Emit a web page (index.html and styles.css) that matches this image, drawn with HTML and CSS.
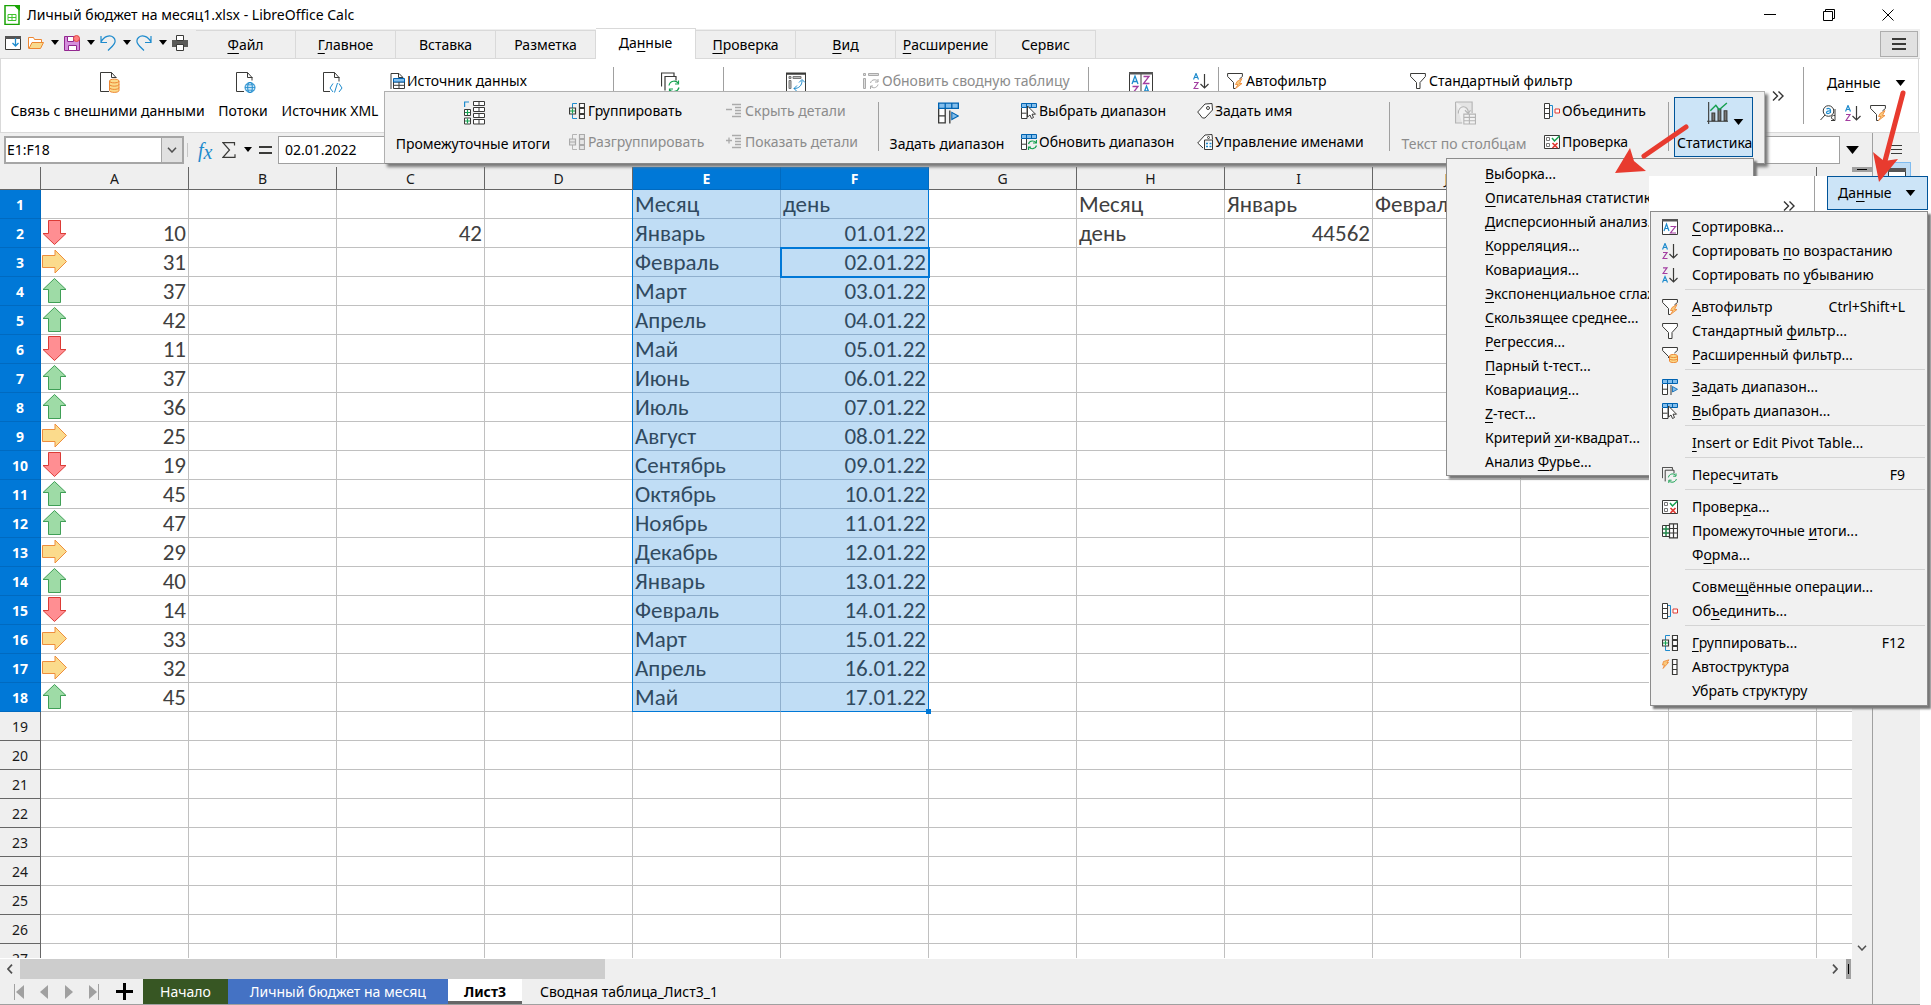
FILE: index.html
```html
<!DOCTYPE html>
<html lang="ru">
<head>
<meta charset="utf-8">
<title>Личный бюджет на месяц1.xlsx - LibreOffice Calc</title>
<link rel="stylesheet" href="styles.css">
</head>
<body>
<svg class="sprite" aria-hidden="true">
  <symbol id="i-down" viewBox="0 0 25 25"><path d="M6.500 .5h12v13h5.500l-11.500 11-11.500-11h5.500z" fill="#ff8e92" stroke="#dc3b36"/></symbol>
  <symbol id="i-up" viewBox="0 0 25 25"><path d="M6.500 24.500h12v-13h5.500l-11.500-11-11.500 11h5.500z" fill="#9edba6" stroke="#3f9f56"/></symbol>
  <symbol id="i-side" viewBox="0 0 25 25"><path d="M.5 6.500v12h12.500v5.500l11.500-11.500-11.500-11.500v5.500z" fill="#fbdb8c" stroke="#ee8e3c"/></symbol>
  <symbol id="i-caret" viewBox="0 0 8 5"><path d="M0 0h8l-4 5z" fill="#000"/></symbol>
  <symbol id="i-doc" viewBox="0 0 16 20"><path d="M1 .5h10l4 4v15H1z" fill="#fff" stroke="#18a303" stroke-width="1.500"/><path d="M10 0h6v6z" fill="#18a303"/><path d="M4 9.500h8v6H4zM4 12.500h8M8 9.500v6" fill="none" stroke="#43c330"/></symbol>
  <symbol id="i-win" viewBox="0 0 16 16"><path d="M.5 2.500h15v12H.5z" fill="#fff" stroke="#3a3a38"/><path d="M0 1h16v3H0z" fill="#555"/><path d="M10.500 3v8M7.500 8l3 3 3-3" fill="none" stroke="#1e8bcd" stroke-width="1.300"/></symbol>
  <symbol id="i-open" viewBox="0 0 16 16"><path d="M.5 13.500v-11h5l1 2h7v3" fill="#fff" stroke="#ed8733"/><path d="M1 13.500l3-6h11.500l-3 6z" fill="#f8db8f" stroke="#ed8733"/></symbol>
  <symbol id="i-save" viewBox="0 0 16 16"><path d="M.5 1.500h13l2 2v12H.5z" fill="#d48fdc" stroke="#92278f"/><path d="M3.500 1.500h6v5h-6zM4.500 10.500h8v5h-8z" fill="#fff" stroke="#92278f"/><circle cx="12.500" cy="3.500" r="3" fill="#ff7d80" stroke="#e24a40"/></symbol>
  <symbol id="i-undo" viewBox="0 0 16 16"><path d="M1 1v6.500h6M1 7C4 1 10-.5 13.500 2.500c4 4 0 8-5.500 13" fill="none" stroke="#1e8bcd" stroke-width="1.200"/></symbol>
  <symbol id="i-redo" viewBox="0 0 16 16"><path d="M15 1v6.500H9M15 7C12 1 6-.5 2.500 2.500c-4 4 0 8 5.500 13" fill="none" stroke="#1e8bcd" stroke-width="1.200"/></symbol>
  <symbol id="i-print" viewBox="0 0 16 16"><path d="M0 5h16v7H0z" fill="#5c5c5a"/><path d="M4.500 .5h7v5h-7zM4.500 9.500h7v6h-7z" fill="#fff" stroke="#3a3a38"/></symbol>
  <symbol id="i-extdata" viewBox="0 0 20 21"><path d="M9 19.500H.5V.5h11l4.500 5M11.500 .5v5h5" fill="none" stroke="#3a3a38"/><path d="M9.500 9v9.500c0 2.500 9.500 2.500 9.500 0V9c0-2.500-9.500-2.500-9.500 0z" fill="#fbdb8c" stroke="#ed8733"/><path d="M9.500 9c0 2.500 9.500 2.500 9.500 0M9.500 12.300c0 2.500 9.500 2.500 9.500 0M9.500 15.500c0 2.500 9.500 2.500 9.500 0" fill="none" stroke="#ed8733"/></symbol>
  <symbol id="i-stream" viewBox="0 0 20 21"><path d="M8 19.500H.5V.5h11l4.500 5v3M11.500 .5v5h5" fill="none" stroke="#3a3a38"/><circle cx="14" cy="15.500" r="5" fill="#cfe7f8" stroke="#1e8bcd"/><ellipse cx="14" cy="15.500" rx="2.300" ry="5" fill="none" stroke="#1e8bcd"/><path d="M9 15.500h10M10 12.800h8M10 18.200h8" stroke="#1e8bcd" stroke-width=".8"/></symbol>
  <symbol id="i-xml" viewBox="0 0 20 21"><path d="M7 19.500H.5V.5h11l4.500 5v4M11.500 .5v5h5" fill="none" stroke="#3a3a38"/><path d="M10 11.500L7 16l3 4M16 11.500l3 4.500-3 4M14.500 11l-3 9.500" fill="none" stroke="#1e8bcd"/></symbol>
  <symbol id="i-source" viewBox="0 0 16 16"><path d="M1 16V.5h8l4 4M8.500 .5v4h4.500" fill="none" stroke="#3a3a38"/><path d="M3.500 9h11v6.500h-11z" fill="#fff" stroke="#3a3a38"/><path d="M3.500 5.500h11v3.500h-11z" fill="#83beec" stroke="#0063b1"/><path d="M3.500 12.300h11M9 9v6.500" stroke="#3a3a38"/></symbol>
  <symbol id="i-refresh" viewBox="0 0 20 20"><path d="M.5 14V.5H13v3M4 18V4h11v4" fill="none" stroke="#3a3a38" stroke-width="1.200"/><path d="M8 13c1-5 7-5.500 9-2.500M17.500 8v3.500H14M18 15c-1 4.500-7 5-9 2.500M8.500 20v-3.500H12" fill="none" stroke="#14a04f" stroke-width="1.200"/></symbol>
  <symbol id="i-pivot" viewBox="0 0 20 20"><path d="M.5 1.500h19v18H.5z" fill="#fff" stroke="#3a3a38"/><path d="M0 0h20v2H0z" fill="#3a3a38"/><path d="M3 4h2v2H3zM7 4h8v2H7zM3 8h2v8H3z" fill="#bbb" stroke="#777"/><path d="M8 16c5 0 8-3 8-8M8 16l3-3M8 16l3 3M16 7l-3 3M16 7l3 3" fill="none" stroke="#1e8bcd"/></symbol>
  <symbol id="i-pivotref" viewBox="0 0 16 16"><path d="M.5 .5h2v2h-2zM5.500 .5h10v2h-10zM.5 5.500h2v10h-2z" fill="#ddd" stroke="#aaa"/><path d="M7.500 10c1-4 6-4 7.500-1.500M15 6v3h-3M15 11.500c-1 4-6 4-7.500 1.500M7.500 16v-3H10" fill="none" stroke="#aaa"/></symbol>
  <symbol id="i-sortbox" viewBox="0 0 24 22"><path d="M.5 1.500h23V22M.5 1.500V22M12 2v20" fill="none" stroke="#3a3a38"/><path d="M0 0h24v2.500H0z" fill="#555"/><path d="M3 12l3-8 3 8M4 9.500h4M14.500 22l3-8 3 8M15.500 19h4" fill="none" stroke="#1e8bcd" stroke-width="1.300"/><path d="M3.500 14.500h5.500L3.500 21.500h6M14.500 4.500h5.500l-5.500 7h6" fill="none" stroke="#a33ea1" stroke-width="1.300"/></symbol>
  <symbol id="i-az" viewBox="0 0 16 16"><path d="M.5 6.500l2.500-6 2.500 6M1.500 4.500h3" fill="none" stroke="#1e8bcd" stroke-width="1.200"/><path d="M1 9.500h4l-4 6h4.500" fill="none" stroke="#a33ea1" stroke-width="1.200"/><path d="M11.500 1v14M7.500 11l4 4 4-4" fill="none" stroke="#3a3a38" stroke-width="1.200"/></symbol>
  <symbol id="i-za" viewBox="0 0 16 16"><path d="M.5 15.500l2.500-6 2.500 6M1.500 13.500h3" fill="none" stroke="#1e8bcd" stroke-width="1.200"/><path d="M1 .8h4l-4 5.700h4.500" fill="none" stroke="#a33ea1" stroke-width="1.200"/><path d="M11.500 1v14M7.500 11l4 4 4-4" fill="none" stroke="#3a3a38" stroke-width="1.200"/></symbol>
  <symbol id="i-sort" viewBox="0 0 16 16"><path d="M.5 1.500h15v14H.5z" fill="#fff" stroke="#3a3a38"/><path d="M0 0h16v2.500H0z" fill="#555"/><path d="M2 12l2.500-7L7 12M3 9.500h3" fill="none" stroke="#1e8bcd" stroke-width="1.200"/><path d="M8.500 7.500h5L8.500 14H14" fill="none" stroke="#a33ea1" stroke-width="1.200"/></symbol>
  <symbol id="i-funnel" viewBox="0 0 16 16"><path d="M.6 .5h14.800v3L10 9.500v6H6.500v-6L.6 3.500z" fill="#fff" stroke="#3a3a38"/></symbol>
  <symbol id="i-auto" viewBox="0 0 16 16"><path d="M8.500 15.500h-2v-6L.6 3.500v-3h14.800v3l-3 2.500" fill="#fff" stroke="#3a3a38"/><path d="M15 5.500l-5 3-1.500 3h2.500L8.500 15.500l6.500-5h-2.500z" fill="#f9c87c" stroke="#ed8733" stroke-width=".8"/></symbol>
  <symbol id="i-advf" viewBox="0 0 16 16"><path d="M6.500 11V9.500L.6 3.500v-3h14.800v3l-3 2.500" fill="#fff" stroke="#3a3a38"/><path d="M7.500 9v5c0 2 8 2 8 0V9c0-2-8-2-8 0z" fill="#fbdb8c" stroke="#ed8733"/><path d="M7.500 9c0 2 8 2 8 0M7.500 11.500c0 2 8 2 8 0" fill="none" stroke="#ed8733"/></symbol>
  <symbol id="i-find" viewBox="0 0 16 16"><circle cx="8.500" cy="6" r="5.300" fill="#fff" stroke="#3a3a38"/><path d="M5 10L.5 15M11 15.500h4V4M15 10.500c-4-1-5 4-1 4" fill="none" stroke="#3a3a38"/><path d="M6.500 4c1.500-1 4-.5 4 1v3M10.500 6c-5-.5-5 3-2 2.500l2-1" fill="none" stroke="#1e8bcd" stroke-width="1.200"/></symbol>
  <symbol id="i-subt" viewBox="0 0 21 24"><path d="M.6 6V1H5" fill="none" stroke="#1e8bcd" stroke-width="1.200"/><path d="M.5 8.500h6v6h-6zM.5 17h6v6h-6zM9.500 .5h11v4h-11zM9.500 6.500h11v4h-11zM9.500 12.500h11v4h-11zM9.500 18.500h11v4.500h-11zM15 .5v4M15 6.500v4M15 12.500v4M15 18.500v4.500" fill="#fff" stroke="#3a3a38"/><path d="M3.500 9v5M1 11.500h5M3.500 17.500v5M1 20h5" stroke="#14a04f" stroke-width="1.200"/></symbol>
  <symbol id="i-group" viewBox="0 0 16 16"><path d="M8 .5H3.500v15H8" fill="none" stroke="#1e8bcd"/><path d="M.5 5h6v6h-6zM10.500 .5h5v4h-5zM10.500 5.500h5v5h-5zM10.500 11.500h5v4h-5z" fill="#fff" stroke="#3a3a38" stroke-width="1.200"/><path d="M3.500 5.500v5M1 8h5" stroke="#14a04f" stroke-width="1.200"/></symbol>
  <symbol id="i-ungroup" viewBox="0 0 16 16"><path d="M8 .5H3.500v15H8" fill="none" stroke="#b5b5b5"/><path d="M.5 5h6v6h-6zM10.500 .5h5v4h-5zM10.500 5.500h5v5h-5zM10.500 11.500h5v4h-5zM1 8h5" fill="#e6e6e6" stroke="#aaa" stroke-width="1.200"/></symbol>
  <symbol id="i-minus" viewBox="0 0 16 16"><path d="M0 6.500h6M6 1.500h9M9 4.500h6M9 7.500h6M9 10.500h6M6 13.500h9" stroke="#aaa" stroke-width="1.300"/></symbol>
  <symbol id="i-plus" viewBox="0 0 16 16"><path d="M0 6.500h6M3 3.500v6M6 1.500h9M9 4.500h6M9 7.500h6M9 10.500h6M6 13.500h9" stroke="#aaa" stroke-width="1.300"/></symbol>
  <symbol id="i-range" viewBox="0 0 16 16"><path d="M.5 5v10.500h5V5M.5 10.200h5M9 6v10" fill="#fff" stroke="#3a3a38"/><path d="M.5 .5h15v4H.5zM5.500 .5v4M10.500 .5v4" fill="#83beec" stroke="#0063b1"/><path d="M10.500 7.500v5.500l5-2.700z" fill="#83beec" stroke="#0063b1" stroke-width=".8"/></symbol>
  <symbol id="i-select" viewBox="0 0 16 16"><path d="M.5 5v10.500h5.500V5M.5 10.200h5" fill="#fff" stroke="#3a3a38"/><path d="M.5 .5h15v4H.5zM5.500 .5v4M10.500 .5v4" fill="#83beec" stroke="#0063b1"/><path d="M6.500 3v11l2.500-2 1.500 3.500 2-1-1.500-3.300h3.500z" fill="#fff" stroke="#3a3a38"/></symbol>
  <symbol id="i-update" viewBox="0 0 16 16"><path d="M.5 5v10.500h5V5M.5 10.200h5" fill="#fff" stroke="#3a3a38"/><path d="M.5 .5h15v4H.5zM5.500 .5v4M10.500 .5v4" fill="#83beec" stroke="#0063b1"/><path d="M7.500 10c1-4 6-3.500 7.500-1.500M15.500 6v3H12M15.500 11.500c-1 4-6 4-7.500 1.500M7.500 16v-3H10" fill="none" stroke="#14a04f" stroke-width="1.200"/></symbol>
  <symbol id="i-tag" viewBox="0 0 16 16"><path d="M.7 9L8 1l7-.5.5 6.500-7.500 8H5.500z" fill="#fff" stroke="#3a3a38"/><circle cx="11" cy="5" r="1.500" fill="none" stroke="#3a3a38"/></symbol>
  <symbol id="i-tags" viewBox="0 0 16 16"><path d="M6 14L.7 9 8 1l7-.5.5 5M7.500 6v9.500h8V6z" fill="#fff" stroke="#3a3a38"/><circle cx="11.500" cy="3.500" r="1" fill="none" stroke="#3a3a38"/><path d="M9 9.500h2M12.500 9.500h2M9 12.500h2M12.500 12.500h2" stroke="#1e8bcd" stroke-width="1.500"/></symbol>
  <symbol id="i-cols" viewBox="0 0 19 21"><path d="M.5 .5h15v10M.5 .5v19h6" fill="#e4e4e4" stroke="#b4b4b4"/><path d="M3 11c0-8 9-8 9-1M9 8l3 3 2-3" fill="none" stroke="#b4b4b4"/><path d="M8 11.500h10.500v9H8zM8 14.500h10.500M8 17.500h10.500M13 11.500v9" fill="#f3f3f3" stroke="#b4b4b4"/></symbol>
  <symbol id="i-merge" viewBox="0 0 16 16"><path d="M.5 .5h5v15h-5zM.5 5.500h5M.5 10.500h5" fill="#fff" stroke="#3a3a38"/><path d="M6 2.500h2.500v11H6" fill="none" stroke="#1e8bcd"/><path d="M11 6h4.500v4H11z" fill="#fff" stroke="#e03a32"/></symbol>
  <symbol id="i-check" viewBox="0 0 16 16"><path d="M.5 1.500h15v13H.5z" fill="#fff" stroke="#3a3a38"/><path d="M2.500 3.500h3v3h-3zM2.500 9.500h3v3h-3z" fill="none" stroke="#777"/><path d="M8 4l2.500 3L15.500 2" fill="none" stroke="#14a04f" stroke-width="1.500"/><path d="M8.500 9l5 5M13.500 9l-5 5" stroke="#e03a32" stroke-width="1.700"/></symbol>
  <symbol id="i-stat" viewBox="0 0 19 20"><path d="M1.500 0v20M0 17.500h19" stroke="#3a3a38"/><path d="M4.500 10v7h2.500v-7zM10 6.500V17h2.500V6.500zM15.500 8v9H18V8z" fill="#777" stroke="#3a3a38"/><path d="M3 8l5-5 3 4 7-6" fill="none" stroke="#14a04f" stroke-width="1.300"/></symbol>
  <symbol id="i-subm" viewBox="0 0 16 16"><path d="M.5 2.500h7v11h-7zM.5 6h7M.5 10h7M4 2.500v11" fill="#fff" stroke="#3a3a38"/><path d="M4 3v10M1 6h6M1 10h6" stroke="#14a04f"/><path d="M7.500 .8h8v14h-8zM7.500 5.500h8M7.500 10h8M11.500 .8v14" fill="#fff" stroke="#3a3a38" stroke-width="1.200"/></symbol>
  <symbol id="i-outline" viewBox="0 0 16 16"><path d="M7 .8L1.500 2.500.5 6h2L1 9.500l5.500-6H5z" fill="#f9c87c" stroke="#ed8733" stroke-width=".8"/><path d="M10.500 .5h4.500v5h-4.500zM10.500 5.500h4.500v5h-4.500zM10.500 10.500h4.500v5h-4.500z" fill="#fff" stroke="#3a3a38" stroke-width="1.200"/></symbol>
  <symbol id="i-more" viewBox="0 0 12 10"><path d="M1 .5L5.500 5 1 9.500M6.500 .5L11 5 6.500 9.500" fill="none" stroke="#333" stroke-width="1.400"/></symbol>
  <symbol id="i-burger" viewBox="0 0 14 12"><path d="M0 1h14M0 6h14M0 11h14" stroke="#3a3a38" stroke-width="2"/></symbol>
  <symbol id="i-chev" viewBox="0 0 10 6"><path d="M1 .7L5 5 9 .7" fill="none" stroke="#505050" stroke-width="1.500"/></symbol>
</svg>

<header class="titlebar">
  <svg class="doc"><use href="#i-doc"/></svg>
  <h1 class="title">Личный бюджет на месяц1.xlsx - LibreOffice Calc</h1>
  <div class="winbtns">
    <button aria-label="Свернуть"><svg viewBox="0 0 12 12"><path d="M0 5.500h12" stroke="#000"/></svg></button>
    <button aria-label="Развернуть"><svg viewBox="0 0 12 12"><path d="M.5 2.500h9v9h-9zM2.500 2.500v-2h9v9h-2" fill="none" stroke="#000"/></svg></button>
    <button aria-label="Закрыть"><svg viewBox="0 0 12 12"><path d="M.5 .5l11 11M11.500 .5l-11 11" stroke="#000"/></svg></button>
  </div>
</header>

<div class="app">
  <nav class="tabstrip">
    <div class="quick">
      <button aria-label="Режим"><svg class="s16"><use href="#i-win"/></svg></button>
      <button aria-label="Открыть"><svg class="s16"><use href="#i-open"/></svg><svg class="caret"><use href="#i-caret"/></svg></button>
      <button aria-label="Сохранить"><svg class="s16"><use href="#i-save"/></svg><svg class="caret"><use href="#i-caret"/></svg></button>
      <button aria-label="Отменить"><svg class="s16"><use href="#i-undo"/></svg><svg class="caret"><use href="#i-caret"/></svg></button>
      <button aria-label="Вернуть"><svg class="s16"><use href="#i-redo"/></svg><svg class="caret"><use href="#i-caret"/></svg></button>
      <button aria-label="Печать"><svg class="s16"><use href="#i-print"/></svg></button>
    </div>
    <div class="tabs">
      <button><u>Ф</u>айл</button><button><u>Г</u>лавное</button><button>Вставка</button><button>Разметка</button><button class="active">Да<u>н</u>ные</button><button><u>П</u>роверка</button><button><u>В</u>ид</button><button><u>Р</u>асширение</button><button>Сервис</button>
    </div>
    <button class="burger" aria-label="Меню"><svg><use href="#i-burger"/></svg></button>
  </nav>

  <section class="ribbon">
    <button class="big"><svg class="s21"><use href="#i-extdata"/></svg>Связь с внешними данными</button>
    <button class="big"><svg class="s21"><use href="#i-stream"/></svg>Потоки</button>
    <button class="big"><svg class="s21"><use href="#i-xml"/></svg>Источник XML</button>
    <button class="row near"><svg class="s16"><use href="#i-source"/></svg>Источник данных</button>
    <i class="sep"></i>
    <button class="big" aria-label="Пересчитать"><svg class="s21"><use href="#i-refresh"/></svg></button>
    <i class="sep"></i>
    <button class="big" aria-label="Сводная таблица"><svg class="s21"><use href="#i-pivot"/></svg></button>
    <button class="row tight" disabled><svg class="s16"><use href="#i-pivotref"/></svg>Обновить сводную таблицу</button>
    <i class="sep"></i>
    <button class="big" aria-label="Сортировка"><svg class="s24"><use href="#i-sortbox"/></svg></button>
    <button class="row tight" aria-label="По возрастанию"><svg class="s16"><use href="#i-az"/></svg></button>
    <i class="sep"></i>
    <button class="row"><svg class="s16"><use href="#i-auto"/></svg>Автофильтр</button>
    <button class="row"><svg class="s16"><use href="#i-funnel"/></svg>Стандартный фильтр</button>
    <button class="more" aria-label="Ещё"><svg><use href="#i-more"/></svg></button>
    <i class="sep"></i>
    <div class="context">
      <button class="ctx-title"><span>Да<u>н</u>ные</span><svg class="caret wide"><use href="#i-caret"/></svg></button>
      <div class="ctx-icons">
        <button aria-label="Найти"><svg class="s16"><use href="#i-find"/></svg></button>
        <button aria-label="По возрастанию"><svg class="s16"><use href="#i-az"/></svg></button>
        <button aria-label="Автофильтр"><svg class="s16"><use href="#i-auto"/></svg></button>
      </div>
    </div>
  </section>

  <div class="workspace">
    <main class="main">
      <div class="formula">
        <div class="namebox"><input aria-label="Диапазон" value="E1:F18"><button aria-label="Список"><svg><use href="#i-chev"/></svg></button></div>
        <i class="fsep"></i>
        <button class="fx" aria-label="Мастер функций"><i>f</i><i class="x">x</i></button>
        <button class="sigma" aria-label="Сумма"><svg class="sig" viewBox="0 0 14 16"><path d="M12.500 3.500V.7H1L7.500 8 1 15.300h12v-3" fill="none" stroke="#3a3a38" stroke-width="1.200"/></svg><svg class="caret"><use href="#i-caret"/></svg></button>
        <button class="eq" aria-label="Формула"><svg viewBox="0 0 13 8"><path d="M0 1h13M0 7h13" stroke="#3a3a38" stroke-width="2"/></svg></button>
        <input class="finput" aria-label="Строка ввода" value="02.01.2022">
        <button class="expand" aria-label="Развернуть"><svg><use href="#i-caret"/></svg></button>
      </div>
      <div class="gridwrap">
        <div class="viewport">
          <table class="sheet">
            <colgroup><col class="rowcol"><col span="13"></colgroup>
            <thead><tr><th><th>A<th>B<th>C<th>D<th class="on">E<th class="on">F<th>G<th>H<th>I<th>J<th>K<th>L<th>M</tr></thead>
            <tbody>
            <tr class="r"><th>1<td><td><td><td><td class="e">Месяц<td class="f">день<td><td>Месяц<td>Январь<td>Февраль<td><td><td></tr>
            <tr class="r"><th>2<td class="n"><svg><use href="#i-down"/></svg>10<td><td class="n">42<td><td class="e">Январь<td class="f n">01.01.22<td><td>день<td class="n">44562<td><td><td><td></tr>
            <tr class="r"><th>3<td class="n"><svg><use href="#i-side"/></svg>31<td><td><td><td class="e">Февраль<td class="f n cur">02.01.22<td><td><td><td><td><td><td></tr>
            <tr class="r"><th>4<td class="n"><svg><use href="#i-up"/></svg>37<td><td><td><td class="e">Март<td class="f n">03.01.22<td><td><td><td><td><td><td></tr>
            <tr class="r"><th>5<td class="n"><svg><use href="#i-up"/></svg>42<td><td><td><td class="e">Апрель<td class="f n">04.01.22<td><td><td><td><td><td><td></tr>
            <tr class="r"><th>6<td class="n"><svg><use href="#i-down"/></svg>11<td><td><td><td class="e">Май<td class="f n">05.01.22<td><td><td><td><td><td><td></tr>
            <tr class="r"><th>7<td class="n"><svg><use href="#i-up"/></svg>37<td><td><td><td class="e">Июнь<td class="f n">06.01.22<td><td><td><td><td><td><td></tr>
            <tr class="r"><th>8<td class="n"><svg><use href="#i-up"/></svg>36<td><td><td><td class="e">Июль<td class="f n">07.01.22<td><td><td><td><td><td><td></tr>
            <tr class="r"><th>9<td class="n"><svg><use href="#i-side"/></svg>25<td><td><td><td class="e">Август<td class="f n">08.01.22<td><td><td><td><td><td><td></tr>
            <tr class="r"><th>10<td class="n"><svg><use href="#i-down"/></svg>19<td><td><td><td class="e">Сентябрь<td class="f n">09.01.22<td><td><td><td><td><td><td></tr>
            <tr class="r"><th>11<td class="n"><svg><use href="#i-up"/></svg>45<td><td><td><td class="e">Октябрь<td class="f n">10.01.22<td><td><td><td><td><td><td></tr>
            <tr class="r"><th>12<td class="n"><svg><use href="#i-up"/></svg>47<td><td><td><td class="e">Ноябрь<td class="f n">11.01.22<td><td><td><td><td><td><td></tr>
            <tr class="r"><th>13<td class="n"><svg><use href="#i-side"/></svg>29<td><td><td><td class="e">Декабрь<td class="f n">12.01.22<td><td><td><td><td><td><td></tr>
            <tr class="r"><th>14<td class="n"><svg><use href="#i-up"/></svg>40<td><td><td><td class="e">Январь<td class="f n">13.01.22<td><td><td><td><td><td><td></tr>
            <tr class="r"><th>15<td class="n"><svg><use href="#i-down"/></svg>14<td><td><td><td class="e">Февраль<td class="f n">14.01.22<td><td><td><td><td><td><td></tr>
            <tr class="r"><th>16<td class="n"><svg><use href="#i-side"/></svg>33<td><td><td><td class="e">Март<td class="f n">15.01.22<td><td><td><td><td><td><td></tr>
            <tr class="r"><th>17<td class="n"><svg><use href="#i-side"/></svg>32<td><td><td><td class="e">Апрель<td class="f n">16.01.22<td><td><td><td><td><td><td></tr>
            <tr class="r last"><th>18<td class="n"><svg><use href="#i-up"/></svg>45<td><td><td><td class="e">Май<td class="f n">17.01.22<td><td><td><td><td><td><td></tr>
            <tr><th>19<td><td><td><td><td><td><td><td><td><td><td><td><td></tr>
            <tr><th>20<td><td><td><td><td><td><td><td><td><td><td><td><td></tr>
            <tr><th>21<td><td><td><td><td><td><td><td><td><td><td><td><td></tr>
            <tr><th>22<td><td><td><td><td><td><td><td><td><td><td><td><td></tr>
            <tr><th>23<td><td><td><td><td><td><td><td><td><td><td><td><td></tr>
            <tr><th>24<td><td><td><td><td><td><td><td><td><td><td><td><td></tr>
            <tr><th>25<td><td><td><td><td><td><td><td><td><td><td><td><td></tr>
            <tr><th>26<td><td><td><td><td><td><td><td><td><td><td><td><td></tr>
            <tr><th>27<td><td><td><td><td><td><td><td><td><td><td><td><td></tr>
            </tbody>
          </table>
        </div>
        <div class="vscroll"><i class="split"></i><svg><use href="#i-chev"/></svg></div>
      </div>
      <div class="hscroll">
        <svg viewBox="0 0 6 10"><path d="M5 .7L1 5l4 4.300" fill="none" stroke="#505050" stroke-width="1.700"/></svg>
        <div class="track"><i class="thumb"></i></div>
        <svg viewBox="0 0 6 10"><path d="M1 .7L5 5 1 9.300" fill="none" stroke="#505050" stroke-width="1.700"/></svg>
        <i class="hsplit"></i>
      </div>
      <footer class="sheettabs">
        <button class="nav" aria-label="Первый"><svg viewBox="0 0 12 16"><path d="M1.500 0v16" stroke="#a0a0a0"/><path d="M11 1v14L3 8z" fill="#a0a0a0"/></svg></button>
        <button class="nav" aria-label="Предыдущий"><svg viewBox="0 0 12 16"><path d="M10 1v14L2 8z" fill="#a0a0a0"/></svg></button>
        <button class="nav" aria-label="Следующий"><svg viewBox="0 0 12 16"><path d="M2 1v14l8-7z" fill="#a0a0a0"/></svg></button>
        <button class="nav" aria-label="Последний"><svg viewBox="0 0 12 16"><path d="M10.500 0v16" stroke="#a0a0a0"/><path d="M1 1v14l8-7z" fill="#a0a0a0"/></svg></button>
        <button class="add" aria-label="Добавить лист"><svg viewBox="0 0 17 17"><path d="M8.500 0v17M0 8.500h17" stroke="#000" stroke-width="3"/></svg></button>
        <button class="st green">Начало</button><button class="st blue">Личный бюджет на месяц</button><button class="st current">Лист3</button><button class="st">Сводная таблица_Лист3_1</button>
      </footer>
    </main>
    <aside class="sidebar">
      <button aria-label="Настройка"><svg viewBox="0 0 11 9"><path d="M0 .5h11M0 4.500h11M0 8.500h11" stroke="#3a3a38"/></svg></button>
      <button class="deck" aria-label="Свойства"><svg viewBox="0 0 18 16"><path d="M.5 1h17v14H.5z" fill="#fff" stroke="#3a3a38"/><path d="M0 0h18v4H0z" fill="#555"/></svg></button>
    </aside>
  </div>
</div>

<section class="panel">
  <button class="big"><svg class="p24"><use href="#i-subt"/></svg>Промежуточные итоги</button>
  <div class="stack">
    <button class="row"><svg class="s16"><use href="#i-group"/></svg>Группировать</button>
    <button class="row" disabled><svg class="s16"><use href="#i-ungroup"/></svg>Разгруппировать</button>
  </div>
  <div class="stack">
    <button class="row" disabled><svg class="s16"><use href="#i-minus"/></svg>Скрыть детали</button>
    <button class="row" disabled><svg class="s16"><use href="#i-plus"/></svg>Показать детали</button>
  </div>
  <i class="sep"></i>
  <button class="big"><svg class="p24"><use href="#i-range"/></svg>Задать диапазон</button>
  <div class="stack near">
    <button class="row"><svg class="s16"><use href="#i-select"/></svg>Выбрать диапазон</button>
    <button class="row"><svg class="s16"><use href="#i-update"/></svg>Обновить диапазон</button>
  </div>
  <div class="stack near">
    <button class="row"><svg class="s16"><use href="#i-tag"/></svg>Задать имя</button>
    <button class="row"><svg class="s16"><use href="#i-tags"/></svg>Управление именами</button>
  </div>
  <i class="sep"></i>
  <button class="big" disabled><svg class="p24"><use href="#i-cols"/></svg>Текст по столбцам</button>
  <div class="stack near">
    <button class="row"><svg class="s16"><use href="#i-merge"/></svg>Объединить</button>
    <button class="row"><svg class="s16"><use href="#i-check"/></svg>Проверка</button>
  </div>
  <i class="sep"></i>
  <button class="stat"><span class="staticons"><svg class="p24"><use href="#i-stat"/></svg><svg class="caret wide"><use href="#i-caret"/></svg></span><span>Статистика</span></button>
</section>

<ul class="menu statmenu">
  <li><button><u>В</u>ыборка...</button></li>
  <li><button><u>О</u>писательная статистика...</button></li>
  <li><button><u>Д</u>исперсионный анализ...</button></li>
  <li><button><u>К</u>орреляция...</button></li>
  <li><button>Ковариа<u>ц</u>ия...</button></li>
  <li><button><u>Э</u>кспоненциальное сглаживание...</button></li>
  <li><button><u>С</u>кользящее среднее...</button></li>
  <li><button><u>Р</u>егрессия...</button></li>
  <li><button><u>П</u>арный t-тест...</button></li>
  <li><button>Ковариаци<u>я</u>...</button></li>
  <li><button><u>Z</u>-тест...</button></li>
  <li><button>Критерий <u>х</u>и-квадрат...</button></li>
  <li><button>Анализ <u>Ф</u>урье...</button></li>
</ul>

<section class="datapop">
  <div class="popbar">
    <svg class="popmore"><use href="#i-more"/></svg>
    <i class="sep"></i>
    <button class="popbtn"><span>Да<u>н</u>ные</span><svg class="caret wide"><use href="#i-caret"/></svg></button>
  </div>
  <ul class="menu datamenu">
    <li><button><svg class="s16"><use href="#i-sort"/></svg><span><u>С</u>ортировка...</span></button></li>
    <li><button><svg class="s16"><use href="#i-az"/></svg><span>Сортировать <u>п</u>о возрастанию</span></button></li>
    <li><button><svg class="s16"><use href="#i-za"/></svg><span>Сортировать по <u>у</u>быванию</span></button></li>
    <li class="div"><button><svg class="s16"><use href="#i-auto"/></svg><span><u>А</u>втофильтр</span><kbd>Ctrl+Shift+L</kbd></button></li>
    <li><button><svg class="s16"><use href="#i-funnel"/></svg><span>Стандартный <u>ф</u>ильтр...</span></button></li>
    <li><button><svg class="s16"><use href="#i-advf"/></svg><span><u>Р</u>асширенный фильтр...</span></button></li>
    <li class="div"><button><svg class="s16"><use href="#i-range"/></svg><span><u>З</u>адать диапазон...</span></button></li>
    <li><button><svg class="s16"><use href="#i-select"/></svg><span><u>В</u>ыбрать диапазон...</span></button></li>
    <li class="div"><button><span><u>I</u>nsert or Edit Pivot Table...</span></button></li>
    <li class="div"><button><svg class="s16"><use href="#i-refresh"/></svg><span>Перес<u>ч</u>итать</span><kbd>F9</kbd></button></li>
    <li class="div"><button><svg class="s16"><use href="#i-check"/></svg><span>Провер<u>к</u>а...</span></button></li>
    <li><button><svg class="s16"><use href="#i-subm"/></svg><span>Промежуточные <u>и</u>тоги...</span></button></li>
    <li><button><span>Ф<u>о</u>рма...</span></button></li>
    <li class="div"><button><span>Совме<u>щ</u>ённые операции...</span></button></li>
    <li><button><svg class="s16"><use href="#i-merge"/></svg><span>Об<u>ъ</u>единить...</span></button></li>
    <li class="div"><button><svg class="s16"><use href="#i-group"/></svg><span><u>Г</u>руппировать...</span><kbd>F12</kbd></button></li>
    <li><button><svg class="s16"><use href="#i-outline"/></svg><span>Автоструктура</span></button></li>
    <li><button><span>Убрать структуру</span></button></li>
  </ul>
</section>

<svg class="arrows" viewBox="0 0 320 110" aria-hidden="true">
  <path d="M76 38L34 67" stroke="#e83b2f" stroke-width="5" stroke-linecap="round"/>
  <path d="M5 84L20 59l4 13 12 10z" fill="#e83b2f"/>
  <path d="M293 4L275 72" stroke="#e83b2f" stroke-width="5" stroke-linecap="round"/>
  <path d="M269 93L263 63l11 9 14-2z" fill="#e83b2f"/>
</svg>
</body>
</html>
```
FILE: styles.css
```css
* { box-sizing: border-box; }
html, body { height: 100%; }
body {
  position: relative;
  display: flex;
  flex-direction: column;
  margin: 0;
  overflow: hidden;
  background: #fff;
  color: #000;
  font: 14px/20px "Noto Sans", "Open Sans", sans-serif;
}
button, input, kbd { font: inherit; color: inherit; }
button {
  display: flex;
  align-items: center;
  margin: 0;
  padding: 0;
  border: 0;
  background: none;
  white-space: nowrap;
}
button:disabled { color: #8c8c8c; }
svg { display: block; flex: none; }
u { text-underline-offset: 3px; text-decoration-skip-ink: none; }
.sprite { position: absolute; width: 0; height: 0; }
.s16 { width: 16px; height: 16px; }
.s21 { width: 20px; height: 21px; margin-left: 5px; }
.s24 { width: 24px; height: 22px; }
.p24 { width: 21px; height: 24px; margin-left: 3px; }
.caret { width: 8px; height: 5px; }
.caret.wide { width: 11px; height: 6px; }
.sep { width: 1px; background: #a0a0a0; }

.titlebar { display: flex; align-items: center; height: 29px; padding-left: 4px; }
.doc { width: 16px; height: 20px; }
.title { flex: 1; margin: 0 0 0 7px; font-size: 14px; font-weight: 400; }
.winbtns { display: flex; gap: 47px; padding-right: 37px; }
.winbtns svg { width: 12px; height: 12px; }

.app { display: flex; flex: 1; flex-direction: column; min-height: 0; padding-right: 11px; }
.tabstrip { display: flex; align-items: flex-end; height: 30px; background: #efefef; border-bottom: 1px solid #d9d9d9; }
.quick { display: flex; align-items: center; gap: 5px; width: 196px; height: 29px; padding: 0 0 2px 5px; }
.quick button { gap: 7px; }
.quick button:first-child { margin-right: 2px; }
.tabs { display: flex; flex: 1; align-items: flex-end; }
.tabs button {
  justify-content: center;
  width: 100px;
  height: 28px;
  border: solid #d9d9d9;
  border-width: 1px 1px 0 0;
}
.tabs button.active { height: 31px; margin-bottom: -1px; padding-bottom: 2px; background: #fff; }
.burger {
  align-self: center;
  justify-content: center;
  width: 38px;
  height: 26px;
  margin-right: 2px;
  background: #e1e1e1;
  border: 1px solid #adadad;
}
.burger svg { width: 14px; height: 12px; }

.ribbon {
  display: grid;
  grid-template-columns: 205px 66px 108px 229px 1px 109px 1px 139px 225px 1px 104px 25px 1px 183px 1fr 38px 1px 114px;
  height: 74px;
  margin-right: 1px;
  padding-left: 4px;
  border: solid #d9d9d9;
  border-width: 0 1px 1px;
}
.ribbon .big { flex-direction: column; justify-content: flex-start; gap: 8px; padding-top: 13px; }
.ribbon .row { align-self: start; gap: 3px; height: 20px; margin-top: 12px; padding-left: 8px; }
.ribbon .near { gap: 1px; padding-left: 6px; }
.ribbon .tight { padding-left: 0; }
.ribbon .sep { margin: 8px 0; }
.more { padding-left: 7px; }
.more svg, .popmore { width: 12px; height: 10px; }
.context { padding: 14px 0 0 16px; }
.ctx-title { gap: 14px; padding-left: 7px; }
.ctx-icons { display: flex; gap: 9px; margin-top: 12px; }

.workspace { display: flex; flex: 1; min-height: 0; border-bottom: 1px solid #a0a0a0; }
.main { display: flex; flex: 1; flex-direction: column; min-width: 0; background: #efefef; }
.formula { display: flex; flex: none; align-items: center; height: 34px; padding: 0 12px 1px 4px; }
.namebox { display: flex; width: 180px; height: 28px; background: #fff; border: 2px solid #a6a6a6; }
.namebox input { flex: 1; min-width: 0; padding: 0 1px; border: 0; background: none; }
.namebox button { justify-content: center; width: 21px; background: #e1e1e1; border-left: 1px solid #a6a6a6; }
.namebox svg { width: 10px; height: 6px; }
.fsep { width: 1px; height: 14px; margin-left: 3px; background: #c6c6c6; }
.fx { width: 25px; margin-left: 10px; color: #1e8bcd; font: italic 20px/24px "Liberation Serif", serif; }
.fx .x { padding-top: 4px; }
.sigma { gap: 8px; width: 37px; margin-left: -1px; }
.sig { width: 14px; height: 16px; }
.eq svg { width: 13px; height: 8px; }
.finput { flex: 1; height: 28px; margin-left: 6px; padding: 0 6px; background: #fff; border: 1px solid #a0a0a0; }
.expand { margin-left: 5px; }
.expand svg { width: 15px; height: 8px; }

.gridwrap { display: flex; flex: 1; min-height: 0; }
.viewport { flex: 1; min-width: 0; overflow: hidden; background: #fff; border-bottom: 1px solid #fff; }
.sheet { width: 1965px; table-layout: fixed; border-collapse: separate; border-spacing: 0; color: #404040; }
.rowcol { width: 41px; }
.sheet th { padding: 1px 0 0; border: solid #666; border-width: 0 1px 1px 0; background: #efefef; color: #1a1a1a; font-weight: 400; }
.sheet thead th { height: 23px; }
.sheet tbody th { height: 29px; }
.sheet th.on, .sheet .r th { background: #0078d7; border-color: #006ac0; color: #fff; font-weight: 700; }
.sheet td {
  height: 29px;
  padding: 0 2px;
  border: solid #c0c0c0;
  border-width: 0 1px 1px 0;
  font: 23px/26px "Carlito", "Lato", "Noto Sans", sans-serif;
  white-space: nowrap;
}
.sheet .n { text-align: right; }
.sheet td svg { float: left; width: 25px; height: 25px; margin-left: -1px; }
.sheet .e, .sheet .f { background: #c0ddf5; border-color: #8fafcd; color: #304a60; }
.sheet .e { box-shadow: -1px 0 #0078d7; }
.sheet .f { border-right-color: #0078d7; }
.sheet .last .e, .sheet .last .f { border-bottom-color: #0078d7; }
.sheet .last .f { position: relative; }
.sheet .last .f::after { content: ""; position: absolute; right: -3px; bottom: -3px; width: 5px; height: 5px; background: #0078d7; }
.sheet .cur { outline: 2px solid #0078d7; outline-offset: -1px; }
.vscroll { display: flex; flex-direction: column; align-items: center; justify-content: space-between; width: 20px; padding-bottom: 8px; }
.vscroll svg { width: 10px; height: 6px; }
.split { align-self: stretch; height: 5px; background: #000; border: solid #a0a0a0; border-width: 2px 5px; }

.hscroll { display: flex; flex: none; align-items: center; height: 20px; padding: 0 21px 0 7px; }
.hscroll svg { width: 6px; height: 10px; }
.track { flex: 1; height: 20px; margin: 0 6px 0 7px; }
.thumb { display: block; width: 585px; height: 20px; background: #cdcdcd; }
.hsplit { width: 5px; height: 20px; margin-left: 8px; background: #000; border: solid #a0a0a0; border-width: 5px 2px; }
.sheettabs { display: flex; flex: none; align-items: center; height: 25px; padding-left: 13px; }
.nav { width: 25px; }
.nav svg { width: 12px; height: 16px; }
.add { width: 30px; padding-left: 3px; }
.add svg { width: 17px; height: 17px; }
.st { height: 25px; padding: 0 18px; }
.st.green { background: #375623; color: #fff; padding: 0 17px; }
.st.blue { padding: 0 22px; background: #4472c4; color: #fff; }
.st.current { padding: 0 16px; background: #fff; font-weight: 700; box-shadow: inset 0 -3px #666; }

.sidebar { display: flex; flex-direction: column; align-items: center; gap: 8px; width: 48px; padding-top: 12px; background: #efefef; border-left: 1px solid #a0a0a0; }
.sidebar svg { width: 11px; height: 9px; }
.deck { justify-content: center; width: 28px; height: 28px; background: #c0ddf5; border: 1px solid #7fbcf0; }
.sidebar .deck svg { width: 18px; height: 16px; }

/* Drop-down with the ribbon commands that do not fit */
.panel {
  position: absolute;
  top: 91px;
  left: 384px;
  display: grid;
  grid-template-columns: 176px 157px 160px 1px 136px 176px 198px 1px 148px 130px 1px 95px;
  height: 73px;
  background: #f0f0f0;
  border: 1px solid #b0b0b0;
  border-bottom-color: #888;
  box-shadow: 3px 3px 3px #777;
}
.panel .big { flex-direction: column; justify-content: space-between; padding: 9px 0; }
.panel .stack { display: flex; flex-direction: column; gap: 11px; padding: 9px 0 0 8px; }
.panel .row { gap: 3px; }
.panel .near { padding-left: 6px; }
.panel .near .row { gap: 2px; }
.panel .sep { margin: 10px 0 12px; }
.stat {
  flex-direction: column;
  align-items: stretch;
  justify-content: space-between;
  width: 79px;
  height: 60px;
  margin: 5px 0 0 5px;
  padding: 3px 2px;
  overflow: hidden;
  background: #cce4f7;
  border: 1px solid #005499;
}
.staticons { display: flex; align-items: flex-end; gap: 5px; padding-left: 27px; }

.menu { margin: 0; padding: 3px 0 0; list-style: none; background: #f1f1f1; border: 1px solid #8c8c8c; box-shadow: 3px 3px 2px #777; }
.menu button { width: 100%; height: 24px; }
.statmenu { position: absolute; top: 158px; left: 1446px; width: 308px; height: 318px; }
.statmenu button { display: block; padding-left: 38px; text-align: left; }
.datapop { position: absolute; top: 176px; left: 1649px; width: 282px; height: 532px; background: #fff; }
.popbar { display: flex; align-items: flex-end; justify-content: flex-end; height: 35px; padding-right: 3px; }
.popmore { margin-right: 19px; }
.popbar .sep { height: 35px; }
.popbtn { gap: 13px; height: 34px; width: 101px; margin: 0 0 1px 12px; padding-left: 10px; background: #cce4f7; border: 1px solid #005499; }
.datamenu { width: 278px; height: 495px; margin-left: 1px; }
.datamenu button { gap: 14px; padding: 0 22px 0 11px; }
.datamenu button > span:first-child { margin-left: 30px; }
.datamenu kbd { margin-left: auto; }
.datamenu .div { padding-top: 8px; background: linear-gradient(#d4d4d4, #d4d4d4) 34px 2px / 240px 1px no-repeat; }

.arrows { position: absolute; top: 89px; left: 1610px; width: 320px; height: 110px; fill: none; pointer-events: none; }
```
